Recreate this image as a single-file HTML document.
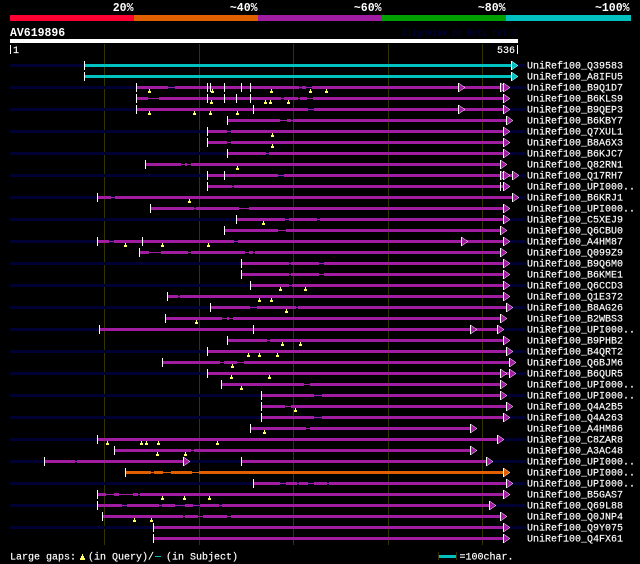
<!DOCTYPE html>
<html><head><meta charset="utf-8"><style>
html,body{margin:0;padding:0;background:#000}
svg{display:block}
text{font-family:"Liberation Mono",monospace;fill:#fff;stroke:#fff;stroke-width:.15px;font-size:10px;white-space:pre}
.h{font-weight:bold;font-size:11.5px;text-anchor:end;stroke-width:0}
</style></head><body>
<svg width="640" height="564" viewBox="0 0 640 564" xmlns="http://www.w3.org/2000/svg">
<defs>
<g id="t"><polygon points="0.5,-4 0.5,5 7,0.5" stroke="#fff" stroke-width=".5"/><rect x="0" y="-4" width="1" height="9" fill="#fff"/></g>
<path id="m" d="M0 0h1v2h1v2h-3v-2h1z" fill="#ffff66"/>
</defs>
<rect width="640" height="564" fill="#000"/>
<g>
<rect x="10" y="15" width="124" height="6" fill="#ff0033"/>
<rect x="134" y="15" width="124" height="6" fill="#e06000"/>
<rect x="258" y="15" width="124" height="6" fill="#a01ca0"/>
<rect x="382" y="15" width="124" height="6" fill="#00a000"/>
<rect x="506" y="15" width="125" height="6" fill="#00c0c0"/>
<rect x="10" y="39" width="508" height="4" fill="#fff"/>
<rect x="10" y="45" width="1" height="9" fill="#fff"/>
<rect x="517" y="45" width="1" height="9" fill="#fff"/>
<path d="M104.5 44V545M199.5 44V545M293.5 44V545M388.5 44V545M482.5 44V545" stroke="#333300" fill="none"/>
<path stroke="#000033" stroke-width="3" fill="none" d="M10 65.5H526M10 87.5H526M10 109.5H526M10 131.5H526M10 153.5H526M10 175.5H526M10 197.5H526M10 219.5H526M10 241.5H526M10 263.5H526M10 285.5H526M10 307.5H526M10 329.5H526M10 351.5H526M10 373.5H526M10 395.5H526M10 417.5H526M10 439.5H526M10 461.5H526M10 483.5H526M10 505.5H526M10 527.5H526"/>
<path stroke="#a01ca0" stroke-width="1" fill="none" d="M137 87.5H503M137 98.5H503M137 109.5H503M228 120.5H506M208 131.5H503M208 142.5H503M228 153.5H503M146 164.5H500M208 175.5H512M208 186.5H503M98 197.5H512M151 208.5H503M237 219.5H503M225 230.5H500M98 241.5H503M140 252.5H500M242 263.5H503M242 274.5H503M251 285.5H503M168 296.5H503M211 307.5H506M166 318.5H500M228 340.5H503M163 362.5H509M222 384.5H500M262 395.5H500M262 406.5H506M262 417.5H503M251 428.5H470M115 450.5H470M45 461.5H183M254 483.5H506M98 494.5H503M98 505.5H489M103 516.5H500"/>
<path stroke="#e06000" stroke-width="1" fill="none" d="M126 472.5H503"/>
<path stroke="#00c0c0" stroke-width="3" fill="none" d="M85 65.5H512M85 76.5H512"/>
<path stroke="#a01ca0" stroke-width="3" fill="none" d="
M137 87.5H168M175 87.5H299M302 87.5H306M312 87.5H503
M137 98.5H148M159 98.5H281M284 98.5H298M300 98.5H307M313 98.5H503
M137 109.5H308M314 109.5H503
M228 120.5H280M287 120.5H291M293 120.5H506
M208 131.5H227M231 131.5H503
M208 142.5H227M231 142.5H503
M228 153.5H266M269 153.5H503
M146 164.5H181M185 164.5H187M191 164.5H500
M208 175.5H278M284 175.5H512
M208 186.5H232M234 186.5H503
M98 197.5H111M115 197.5H512
M151 208.5H194M196 208.5H239M249 208.5H503
M237 219.5H285M289 219.5H317M320 219.5H503
M225 230.5H278M286 230.5H500
M98 241.5H109M114 241.5H234M238 241.5H503
M140 252.5H149M161 252.5H188M191 252.5H245M249 252.5H253M255 252.5H500
M242 263.5H289M291 263.5H319M324 263.5H503
M242 274.5H289M291 274.5H319M324 274.5H503
M251 285.5H289M292 285.5H503
M168 296.5H178M180 296.5H503
M211 307.5H250M257 307.5H296M298 307.5H506
M166 318.5H222M227 318.5H229M233 318.5H500
M100 329.5H497
M228 340.5H267M270 340.5H503
M208 351.5H506
M163 362.5H220M224 362.5H237M244 362.5H509
M208 373.5H509
M222 384.5H304M310 384.5H500
M262 395.5H314M322 395.5H500
M262 406.5H285M291 406.5H506
M262 417.5H314M322 417.5H503
M251 428.5H306M310 428.5H470
M98 439.5H497
M115 450.5H191M194 450.5H470
M45 461.5H75M77 461.5H183M242 461.5H486
M254 483.5H280M286 483.5H297M299 483.5H308M314 483.5H327M329 483.5H506
M98 494.5H106M114 494.5H119M133 494.5H138M140 494.5H503
M98 505.5H122M127 505.5H159M162 505.5H175M185 505.5H193M200 505.5H219M222 505.5H489
M103 516.5H183M185 516.5H198M203 516.5H227M231 516.5H500
M154 527.5H503
M154 538.5H503"/>
<path stroke="#e06000" stroke-width="3" fill="none" d="M126 472.5H151M154 472.5H163M171 472.5H192M199 472.5H503"/>
<path stroke="#fff" stroke-width="1" fill="none" d="
M84.5 61v9M84.5 72v9
M136.5 83v9M207.5 83v9M210.5 83v9M224.5 83v9M241.5 83v9M250.5 83v9
M136.5 94v9M207.5 94v9M224.5 94v9M236.5 94v9M250.5 94v9
M136.5 105v9M253.5 105v9
M227.5 116v9M207.5 127v9M207.5 138v9M227.5 149v9M145.5 160v9
M207.5 171v9M224.5 171v9M207.5 182v9M500.5 182v9M97.5 193v9M150.5 204v9
M236.5 215v9M224.5 226v9M97.5 237v9M142.5 237v9M139.5 248v9
M241.5 259v9M241.5 270v9M250.5 281v9M167.5 292v9M210.5 303v9M165.5 314v9
M99.5 325v9M253.5 325v9M227.5 336v9M207.5 347v9M162.5 358v9M207.5 369v9
M221.5 380v9M261.5 391v9M261.5 402v9M261.5 413v9M250.5 424v9M97.5 435v9
M114.5 446v9M44.5 457v9M241.5 457v9M125.5 468v9M253.5 479v9M97.5 490v9
M97.5 501v9M102.5 512v9M153.5 523v9M153.5 534v9"/>
<rect x="438" y="552" width="1" height="8" fill="#333300"/>
<rect x="456" y="552" width="1" height="8" fill="#333300"/>
<rect x="439" y="555" width="17" height="3" fill="#00c0c0"/>
<rect x="155" y="556" width="6" height="1" fill="#00c0c0"/>
<path fill="#ffff66" d="M82 554h1v2h1v2h1v2h-5v-2h1v-2h1z"/>
<g>
<use href="#m" x="149" y="89"/><use href="#m" x="212" y="89"/><use href="#m" x="271" y="89"/><use href="#m" x="310" y="89"/><use href="#m" x="326" y="89"/>
<use href="#m" x="211" y="100"/><use href="#m" x="265" y="100"/><use href="#m" x="270" y="100"/><use href="#m" x="288" y="100"/>
<use href="#m" x="149" y="111"/><use href="#m" x="194" y="111"/><use href="#m" x="210" y="111"/><use href="#m" x="237" y="111"/>
<use href="#m" x="272" y="133"/><use href="#m" x="272" y="144"/><use href="#m" x="237" y="166"/><use href="#m" x="189" y="199"/>
<use href="#m" x="263" y="221"/><use href="#m" x="125" y="243"/><use href="#m" x="162" y="243"/><use href="#m" x="208" y="243"/>
<use href="#m" x="280" y="287"/><use href="#m" x="305" y="287"/><use href="#m" x="259" y="298"/><use href="#m" x="271" y="298"/>
<use href="#m" x="286" y="309"/><use href="#m" x="196" y="320"/><use href="#m" x="282" y="342"/><use href="#m" x="300" y="342"/>
<use href="#m" x="248" y="353"/><use href="#m" x="259" y="353"/><use href="#m" x="277" y="353"/><use href="#m" x="232" y="364"/>
<use href="#m" x="231" y="375"/><use href="#m" x="269" y="375"/><use href="#m" x="241" y="386"/><use href="#m" x="295" y="408"/>
<use href="#m" x="264" y="430"/><use href="#m" x="107" y="441"/><use href="#m" x="141" y="441"/><use href="#m" x="146" y="441"/><use href="#m" x="158" y="441"/><use href="#m" x="217" y="441"/>
<use href="#m" x="157" y="452"/><use href="#m" x="185" y="452"/><use href="#m" x="162" y="496"/><use href="#m" x="184" y="496"/><use href="#m" x="209" y="496"/>
<use href="#m" x="134" y="518"/><use href="#m" x="151" y="518"/>
</g>
<g fill="#00c0c0"><use href="#t" x="511" y="65"/><use href="#t" x="511" y="76"/></g>
<g fill="#a01ca0">
<use href="#t" x="458" y="87"/><use href="#t" x="500" y="87"/><use href="#t" x="503" y="87"/>
<use href="#t" x="503" y="98"/><use href="#t" x="458" y="109"/><use href="#t" x="503" y="109"/>
<use href="#t" x="506" y="120"/><use href="#t" x="503" y="131"/><use href="#t" x="503" y="142"/><use href="#t" x="503" y="153"/>
<use href="#t" x="500" y="164"/><use href="#t" x="500" y="175"/><use href="#t" x="503" y="175"/><use href="#t" x="512" y="175"/>
<use href="#t" x="503" y="186"/><use href="#t" x="512" y="197"/><use href="#t" x="503" y="208"/><use href="#t" x="503" y="219"/>
<use href="#t" x="500" y="230"/><use href="#t" x="461" y="241"/><use href="#t" x="503" y="241"/><use href="#t" x="500" y="252"/>
<use href="#t" x="503" y="263"/><use href="#t" x="503" y="274"/><use href="#t" x="503" y="285"/><use href="#t" x="503" y="296"/>
<use href="#t" x="506" y="307"/><use href="#t" x="500" y="318"/><use href="#t" x="470" y="329"/><use href="#t" x="497" y="329"/>
<use href="#t" x="503" y="340"/><use href="#t" x="506" y="351"/><use href="#t" x="509" y="362"/><use href="#t" x="500" y="373"/><use href="#t" x="509" y="373"/>
<use href="#t" x="500" y="384"/><use href="#t" x="500" y="395"/><use href="#t" x="506" y="406"/><use href="#t" x="503" y="417"/>
<use href="#t" x="470" y="428"/><use href="#t" x="497" y="439"/><use href="#t" x="470" y="450"/><use href="#t" x="183" y="461"/><use href="#t" x="486" y="461"/>
<use href="#t" x="506" y="483"/><use href="#t" x="503" y="494"/><use href="#t" x="489" y="505"/><use href="#t" x="500" y="516"/><use href="#t" x="503" y="527"/><use href="#t" x="503" y="538"/>
</g>
<g fill="#e06000"><use href="#t" x="503" y="472"/></g>
</g>
<text class="h" x="133.5" y="11">20%</text>
<text class="h" x="257.5" y="11">~40%</text>
<text class="h" x="381.5" y="11">~60%</text>
<text class="h" x="505.5" y="11">~80%</text>
<text class="h" x="629.5" y="11">~100%</text>
<text x="10" y="36" font-weight="bold" style="font-size:11.5px;stroke-width:0">AV619896</text>
<text x="402" y="36" font-weight="bold" textLength="115" lengthAdjust="spacingAndGlyphs" style="fill:#000033;stroke:none;font-size:10px">AlignView.pm Beta rel.7</text>
<text x="13" y="53">1</text>
<text x="497" y="53">536</text>
<g>
<text x="527" y="68.5">UniRef100_Q39583</text>
<text x="527" y="79.5">UniRef100_A8IFU5</text>
<text x="527" y="90.5">UniRef100_B9Q1D7</text>
<text x="527" y="101.5">UniRef100_B6KLS9</text>
<text x="527" y="112.5">UniRef100_B9QEP3</text>
<text x="527" y="123.5">UniRef100_B6KBY7</text>
<text x="527" y="134.5">UniRef100_Q7XUL1</text>
<text x="527" y="145.5">UniRef100_B8A6X3</text>
<text x="527" y="156.5">UniRef100_B6KJC7</text>
<text x="527" y="167.5">UniRef100_Q82RN1</text>
<text x="527" y="178.5">UniRef100_Q17RH7</text>
<text x="527" y="189.5">UniRef100_UPI000..</text>
<text x="527" y="200.5">UniRef100_B6KRJ1</text>
<text x="527" y="211.5">UniRef100_UPI000..</text>
<text x="527" y="222.5">UniRef100_C5XEJ9</text>
<text x="527" y="233.5">UniRef100_Q6CBU0</text>
<text x="527" y="244.5">UniRef100_A4HM87</text>
<text x="527" y="255.5">UniRef100_Q099Z9</text>
<text x="527" y="266.5">UniRef100_B9Q6M0</text>
<text x="527" y="277.5">UniRef100_B6KME1</text>
<text x="527" y="288.5">UniRef100_Q6CCD3</text>
<text x="527" y="299.5">UniRef100_Q1E372</text>
<text x="527" y="310.5">UniRef100_B8AG26</text>
<text x="527" y="321.5">UniRef100_B2WBS3</text>
<text x="527" y="332.5">UniRef100_UPI000..</text>
<text x="527" y="343.5">UniRef100_B9PHB2</text>
<text x="527" y="354.5">UniRef100_B4QRT2</text>
<text x="527" y="365.5">UniRef100_Q6BJM6</text>
<text x="527" y="376.5">UniRef100_B6QUR5</text>
<text x="527" y="387.5">UniRef100_UPI000..</text>
<text x="527" y="398.5">UniRef100_UPI000..</text>
<text x="527" y="409.5">UniRef100_Q4A2B5</text>
<text x="527" y="420.5">UniRef100_Q4A263</text>
<text x="527" y="431.5">UniRef100_A4HM86</text>
<text x="527" y="442.5">UniRef100_C8ZAR8</text>
<text x="527" y="453.5">UniRef100_A3AC48</text>
<text x="527" y="464.5">UniRef100_UPI000..</text>
<text x="527" y="475.5">UniRef100_UPI000..</text>
<text x="527" y="486.5">UniRef100_UPI000..</text>
<text x="527" y="497.5">UniRef100_B5GAS7</text>
<text x="527" y="508.5">UniRef100_Q69L88</text>
<text x="527" y="519.5">UniRef100_Q0JNP4</text>
<text x="527" y="530.5">UniRef100_Q9Y075</text>
<text x="527" y="541.5">UniRef100_Q4FX61</text>
</g>
<text x="10" y="559.5">Large gaps:</text>
<text x="88" y="559.5">(in Query)/</text>
<text x="166" y="559.5">(in Subject)</text>
<text x="459.5" y="559.5">=100char.</text>
</svg>
</body></html>
